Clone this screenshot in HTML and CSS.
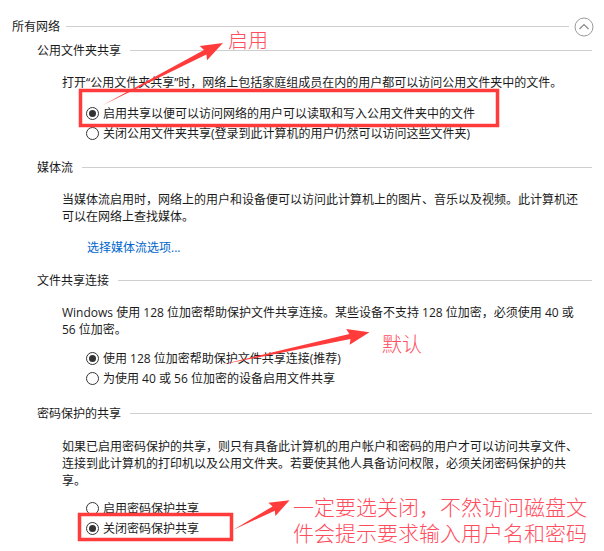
FILE: index.html
```html
<!DOCTYPE html>
<html>
<head>
	<meta charset="utf-8">
	<title>高级共享设置</title>
	<link rel="stylesheet" href="styles.css">
</head>
<body>
	<div class="page">
		<div class="group-head">
			<span>所有网络</span>
			<span class="rule"></span>
			<span class="collapse">
				<svg width="20" height="20" viewBox="0 0 20 20">
					<circle cx="10" cy="10" r="9" fill="none" stroke="#9a9a9a" stroke-width="1"/>
					<path d="M5.5 12 L10 7.5 L14.5 12" fill="none" stroke="#8a8a8a" stroke-width="1.2"/>
				</svg>
			</span>
		</div>

		<div class="sect-head first"><span>公用文件夹共享</span><span class="rule"></span></div>
		<p class="desc">打开“公用文件夹共享”时，网络上包括家庭组成员在内的用户都可以访问公用文件夹中的文件。</p>
		<div class="options opt-a">
			<div class="opt"><span class="radio on"></span>启用共享以便可以访问网络的用户可以读取和写入公用文件夹中的文件</div>
			<div class="opt"><span class="radio"></span>关闭公用文件夹共享(登录到此计算机的用户仍然可以访问这些文件夹)</div>
		</div>

		<div class="sect-head media"><span>媒体流</span><span class="rule"></span></div>
		<p class="desc">当媒体流启用时，网络上的用户和设备便可以访问此计算机上的图片、音乐以及视频。此计算机还<br>可以在网络上查找媒体。</p>
		<a class="link" href="#">选择媒体流选项...</a>

		<div class="sect-head"><span>文件共享连接</span><span class="rule"></span></div>
		<p class="desc">Windows 使用 128 位加密帮助保护文件共享连接。某些设备不支持 128 位加密，必须使用 40 或<br>56 位加密。</p>
		<div class="options opt-b">
			<div class="opt"><span class="radio on"></span>使用 128 位加密帮助保护文件共享连接(推荐)</div>
			<div class="opt"><span class="radio"></span>为使用 40 或 56 位加密的设备启用文件共享</div>
		</div>

		<div class="sect-head pwd"><span>密码保护的共享</span><span class="rule"></span></div>
		<p class="desc pwd-desc">如果已启用密码保护的共享，则只有具备此计算机的用户帐户和密码的用户才可以访问共享文件、<br>连接到此计算机的打印机以及公用文件夹。若要使其他人具备访问权限，必须关闭密码保护的共<br>享。</p>
		<div class="options opt-c">
			<div class="opt"><span class="radio"></span>启用密码保护共享</div>
			<div class="opt tall"><span class="radio on"></span>关闭密码保护共享</div>
		</div>

		<div class="notes">
			<svg class="marks" width="604" height="551" viewBox="0 0 604 551">
				<rect x="80.5" y="90.5" width="417" height="35" fill="none" stroke="#ff3b3b" stroke-width="3.5"/>
				<rect x="79.5" y="514.5" width="152" height="25" fill="none" stroke="#ff3b3b" stroke-width="3.5"/>
				<g fill="#ff3b3b">
					<polygon transform="translate(103 105) rotate(-27.3)" points="0,0 115,-2.6 113,-8 135,0 113,8 115,2.6"/>
					<polygon transform="translate(220 365) rotate(-12.4)" points="0,0 133,-2.6 131,-8 153,0 131,8 133,2.6"/>
					<polygon transform="translate(233 530) rotate(-27.8)" points="0,0 46,-2.4 44,-7.5 64,0 44,7.5 46,2.4"/>
				</g>
			</svg>
			<span class="note n-on">启用</span>
			<span class="note n-def">默认</span>
			<span class="note n-off">一定要选关闭，不然访问磁盘文</span>
			<span class="note n-off2">件会提示要求输入用户名和密码</span>
		</div>
	</div>
</body>
</html>
```
FILE: styles.css
```css
body {
	margin: 0;
	background-color: #fff;
}
.page {
	position: relative;
	width: 604px;
	height: 551px;
	box-sizing: border-box;
	padding: 18px 12px 0 12px;
	overflow: hidden;
	font-family: "Open Sans", "Noto Sans CJK SC", sans-serif;
	font-size: 12px;
	line-height: 17px;
	color: #1a1a1a;
}
.group-head {
	display: flex;
	align-items: center;
	height: 17px;
}
.rule {
	flex: 1;
	border-top: 1px solid #cfcfcf;
	margin-left: 6px;
}
.collapse {
	width: 20px;
	height: 20px;
	margin-left: 5px;
	margin-right: -2px;
}
.collapse svg {
	display: block;
}
.sect-head {
	display: flex;
	align-items: center;
	height: 17px;
	margin-left: 25px;
	margin-top: 16px;
}
.sect-head .rule {
	margin-left: 9px;
}
.sect-head.first {
	margin-top: 7px;
}
.sect-head.pwd {
	margin-top: 17px;
}
.desc {
	margin: 15px 0 0 50px;
	white-space: nowrap;
}
.pwd-desc {
	margin-top: 16px;
}
.link {
	display: block;
	margin: 14px 0 0 75px;
	color: #0066cc;
	text-decoration: none;
}
.options {
	margin-left: 74px;
	margin-top: 10px;
}
.opt-a {
	margin-top: 12px;
}
.opt-c {
	margin-top: 9px;
}
.opt {
	display: flex;
	align-items: center;
	height: 20px;
	white-space: nowrap;
}
.opt.tall {
	height: 21px;
}
.radio {
	width: 13px;
	height: 13px;
	box-sizing: border-box;
	border: 1px solid #333;
	border-radius: 50%;
	margin-right: 4px;
	position: relative;
	flex: none;
}
.radio.on::after {
	content: "";
	position: absolute;
	left: 2px;
	top: 2px;
	width: 7px;
	height: 7px;
	border-radius: 50%;
	background-color: #333;
}
.notes {
	position: absolute;
	left: 0;
	top: 0;
	width: 604px;
	height: 551px;
	pointer-events: none;
}
.marks {
	position: absolute;
	left: 0;
	top: 0;
}
.note {
	position: absolute;
	color: #ff4d5e;
	font-family: "Noto Sans CJK SC", sans-serif;
	font-weight: 300;
	font-size: 20px;
	line-height: 24px;
	white-space: nowrap;
}
.n-on {
	left: 228px;
	top: 28px;
}
.n-def {
	left: 382px;
	top: 332px;
}
.n-off {
	left: 293px;
	top: 494px;
	font-size: 21px;
}
.n-off2 {
	left: 293px;
	top: 520px;
	font-size: 21px;
}
```
